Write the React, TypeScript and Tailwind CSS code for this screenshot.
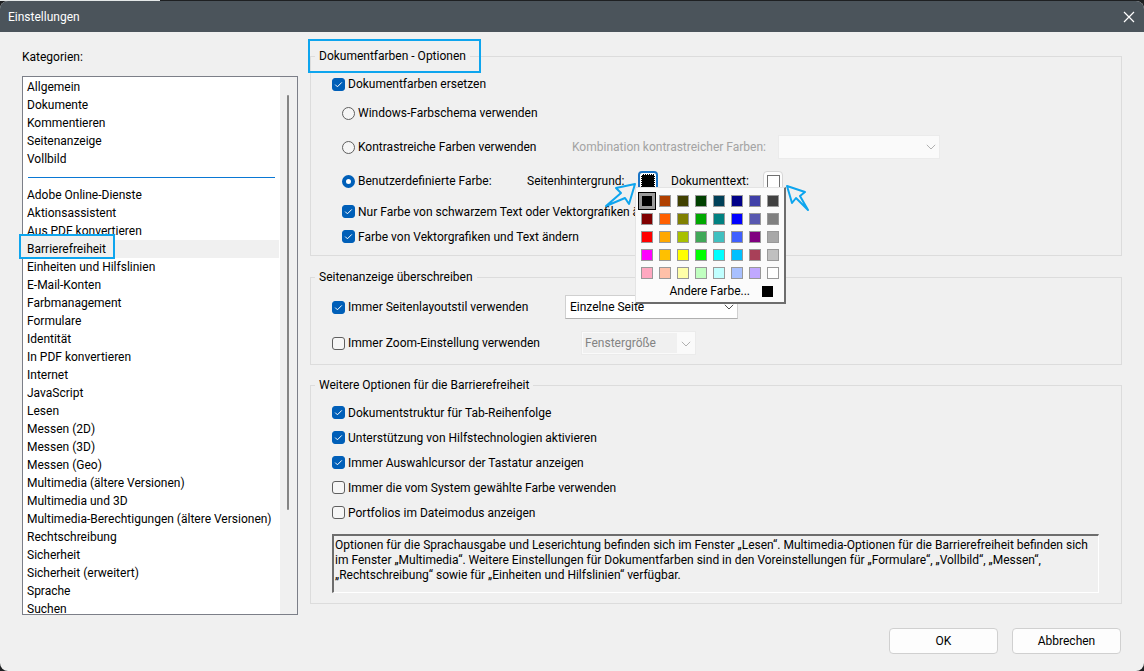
import React, { useState } from "react";

const topCategories = ["Allgemein", "Dokumente", "Kommentieren", "Seitenanzeige", "Vollbild"];

const categories = [
  "Adobe Online-Dienste",
  "Aktionsassistent",
  "Aus PDF konvertieren",
  "Barrierefreiheit",
  "Einheiten und Hilfslinien",
  "E-Mail-Konten",
  "Farbmanagement",
  "Formulare",
  "Identität",
  "In PDF konvertieren",
  "Internet",
  "JavaScript",
  "Lesen",
  "Messen (2D)",
  "Messen (3D)",
  "Messen (Geo)",
  "Multimedia (ältere Versionen)",
  "Multimedia und 3D",
  "Multimedia-Berechtigungen (ältere Versionen)",
  "Rechtschreibung",
  "Sicherheit",
  "Sicherheit (erweitert)",
  "Sprache",
  "Suchen",
];

const palette = [
  "#000000", "#b04000", "#404000", "#004000", "#004058", "#000088", "#4040a8", "#404040",
  "#800000", "#ff6000", "#808000", "#00a800", "#008080", "#0000ff", "#5858b0", "#808080",
  "#ff0000", "#ffa800", "#a8c000", "#40a858", "#40c0c0", "#4060ff", "#800080", "#a8a8a8",
  "#ff00ff", "#ffc000", "#ffff00", "#00ff00", "#00ffff", "#00c0ff", "#a84058", "#c0c0c0",
  "#ffa8c0", "#ffc0a8", "#ffffa8", "#c0ffc0", "#c0ffff", "#a8c0ff", "#c0a8ff", "#ffffff",
];

function Check({ label, on = false }: { label: string; on?: boolean }) {
  const [checked, setChecked] = useState(on);
  return (
    <label className="flex items-center gap-[3px] whitespace-nowrap">
      <span className="relative flex size-[13px] shrink-0">
        <input
          type="checkbox"
          checked={checked}
          onChange={() => setChecked(!checked)}
          className="size-[13px] appearance-none rounded-[3px] border border-[#5f5f5f] bg-[#f6f6f6] checked:border-[#005fb8] checked:bg-[#005fb8]"
        />
        {checked && (
          <svg viewBox="0 0 13 13" className="pointer-events-none absolute inset-0 size-[13px]" fill="none" stroke="#fff" strokeWidth="1">
            <path d="M3.2 6.6l2.2 2.2 4.4-4.4" />
          </svg>
        )}
      </span>
      {label}
    </label>
  );
}

function Radio({ label, on = false }: { label: string; on?: boolean }) {
  return (
    <label className="flex items-center gap-[3px] whitespace-nowrap">
      <input
        type="radio"
        name="farbmodus"
        defaultChecked={on}
        className="size-[13px] shrink-0 appearance-none rounded-full border border-[#5f5f5f] bg-[#f6f6f6] checked:border-4 checked:border-[#005fb8] checked:bg-white"
      />
      {label}
    </label>
  );
}

function Chevron({ muted }: { muted: boolean }) {
  return (
    <svg
      viewBox="0 0 10 6"
      className="pointer-events-none absolute right-1 top-[9px] h-[6px] w-[10px]"
      fill="none"
      stroke={muted ? "#b0b0b0" : "#505050"}
      strokeWidth="1"
    >
      <path d="M.8.8L5 5 9.200.8" />
    </svg>
  );
}

function Group({ title, marked = false, children }: { title: string; marked?: boolean; children: React.ReactNode }) {
  return (
    <fieldset className="min-w-0 border border-[#dcdcdc]">
      <legend className="relative ml-1 px-1 leading-[18px]">
        {title}
        {marked && <span className="pointer-events-none absolute -inset-y-2 -left-[7px] -right-[11px] border-2 border-[#0ea5ee]" />}
      </legend>
      {children}
    </fieldset>
  );
}

function Palette() {
  return (
    <div className="absolute -left-[3px] top-4 z-10 w-[151px] border border-[#e4e4e4] border-b-2 border-r-2 border-b-[#6d6d6d] border-r-[#6d6d6d] bg-[#fbfbfb] pb-[2px] pl-[2px] pt-1">
      <div className="grid w-36 grid-cols-8">
        {palette.map((c, i) => (
          <button
            key={c}
            type="button"
            aria-label={c}
            className={"flex size-[18px] items-center justify-center " + (i === 0 ? "border border-black bg-[#9b9b9b]" : "")}
          >
            <span
              className={i === 0 ? "size-[10px] shrink-0" : "size-3 shrink-0 border border-[#999]"}
              style={{ backgroundColor: c }}
            />
          </button>
        ))}
      </div>
      <button type="button" className="flex h-[18px] w-36 items-center justify-end gap-3 pr-[9px]">
        Andere Farbe...
        <span className="size-[11px] bg-black" />
      </button>
    </div>
  );
}

export default function App() {
  const [active, setActive] = useState("Barrierefreiheit");

  const item = (name: string) => (
    <li key={name} className={active === name ? "relative z-10 bg-[#f0f0f0]" : ""}>
      {active === name && (
        <span className="pointer-events-none absolute -left-1 -top-[6px] h-[25px] w-24 border-2 border-[#0ea5ee] bg-[#f0f0f0]" />
      )}
      <button
        type="button"
        onClick={() => setActive(name)}
        className="relative block h-[18px] w-full whitespace-nowrap pl-1 text-left"
      >
        {name}
      </button>
    </li>
  );

  return (
    <div className="min-h-screen bg-[#1e2022] font-['Roboto','Segoe_UI',sans-serif] text-[12px] leading-[18px] text-black">
      <div className="h-px w-[14%] bg-[#e4e8e8]" />
      <div className="flex min-h-[670px] flex-col overflow-hidden rounded-lg bg-[#f0f0f0]">
        <header className="flex h-[31px] items-center justify-between bg-[#4b545b] pl-2 pr-[9px] text-white">
          <h1>Einstellungen</h1>
          <button type="button" aria-label="Schließen">
            <svg viewBox="0 0 12 12" className="size-3" fill="none" stroke="#fff" strokeWidth="1.2">
              <path d="M1 1l10 10M11 1L1 11" />
            </svg>
          </button>
        </header>

        <main className="flex flex-1 gap-3 px-[22px] pb-[17px] pt-[15px]">
          <nav className="w-[276px] shrink-0" aria-label="Kategorien">
            <h2 className="pt-px">Kategorien:</h2>
            <div className="mt-[10px] flex h-[539px] overflow-y-clip border border-[#7c7f88] bg-white">
              <div className="min-w-0 flex-1 pr-px pt-px">
                <ul>{topCategories.map(item)}</ul>
                <div className="flex h-[18px] items-center pl-[5px] pr-1">
                  <div role="separator" className="h-px w-full bg-[#0a78d4]" />
                </div>
                <ul>{categories.map(item)}</ul>
              </div>
              <div className="flex w-[17px] justify-center bg-[#f0f0f0] pr-px pt-[18px]">
                <div className="h-[415px] w-[2px] rounded bg-[#858585]" />
              </div>
            </div>
          </nav>

          <div className="min-w-0 flex-1">
            <Group title="Dokumentfarben - Optionen" marked>
              <div className="flex flex-col pb-[6px] pl-[21px] pt-2">
                <div className="flex h-[22px] items-center">
                  <Check label="Dokumentfarben ersetzen" on />
                </div>
                <div className="flex flex-col pl-[10px]">
                  <div className="flex h-9 items-center">
                    <Radio label="Windows-Farbschema verwenden" />
                  </div>
                  <div className="flex h-8 items-center">
                    <div className="w-[230px]">
                      <Radio label="Kontrastreiche Farben verwenden" />
                    </div>
                    <label htmlFor="kombi" className="w-[206px] whitespace-nowrap text-[#a3a3a3]">
                      Kombination kontrastreicher Farben:
                    </label>
                    <span className="relative flex w-[162px]">
                      <select id="kombi" disabled className="h-6 w-full appearance-none border border-[#ebebeb] bg-[#fafafa] disabled:opacity-100">
                        <option />
                      </select>
                      <Chevron muted />
                    </span>
                  </div>
                  <div className="flex h-9 items-center">
                    <div className="w-[185px]">
                      <Radio label="Benutzerdefinierte Farbe:" on />
                    </div>
                    <span className="w-[111px]">Seitenhintergrund:</span>
                    <div className="relative">
                      <button type="button" aria-label="Seitenhintergrund" className="flex size-5 items-center justify-center rounded-[4px] border-2 border-[#1b74c5] bg-white">
                        <span className="size-[14px] shrink-0 border border-dotted border-white bg-black" />
                      </button>
                      <Palette />
                      <svg viewBox="0 0 34 28" className="pointer-events-none absolute -left-[34px] top-[10px] z-20 h-7 w-[34px]" fill="none" stroke="#0ea5ee" strokeWidth="2" strokeLinejoin="round">
                        <path d="M31 3L12 7l5 5L2 25l19-8 4 6z" />
                      </svg>
                    </div>
                    <span className="ml-[13px] w-[92px]">Dokumenttext:</span>
                    <div className="relative">
                      <button type="button" aria-label="Dokumenttext" className="flex size-5 items-center justify-center rounded-[4px] border border-[#d6d6d6] bg-[#fdfdfd]">
                        <span className="size-[13px] border border-[#707070] bg-white" />
                      </button>
                      <svg viewBox="0 0 28 28" className="pointer-events-none absolute left-5 top-[12px] z-20 size-7" fill="none" stroke="#0ea5ee" strokeWidth="2" strokeLinejoin="round">
                        <path d="M4 3l5 17 4-5 12 12-8-14 5-4z" />
                      </svg>
                    </div>
                  </div>
                  <div className="flex h-[25px] items-center">
                    <Check label="Nur Farbe von schwarzem Text oder Vektorgrafiken ändern" on />
                  </div>
                  <div className="flex h-[25px] items-center">
                    <Check label="Farbe von Vektorgrafiken und Text ändern" on />
                  </div>
                </div>
              </div>
            </Group>

            <div className="pt-3">
              <Group title="Seitenanzeige überschreiben">
                <div className="flex flex-col pb-[3px] pl-[21px] pt-[3px]">
                  <div className="flex h-9 items-center">
                    <div className="w-[233px]">
                      <Check label="Immer Seitenlayoutstil verwenden" on />
                    </div>
                    <span className="relative flex w-[173px]">
                      <select aria-label="Seitenlayoutstil" className="h-6 w-full appearance-none border border-[#d0d0d0] border-b-[#b0b0b0] bg-white pl-1">
                        <option>Einzelne Seite</option>
                      </select>
                      <Chevron muted={false} />
                    </span>
                  </div>
                  <div className="flex h-9 items-center">
                    <div className="w-[249px]">
                      <Check label="Immer Zoom-Einstellung verwenden" />
                    </div>
                    <span className="relative flex h-6 w-[115px] border border-[#ebebeb] bg-[#fafafa] py-px pl-px pr-[18px]">
                      <select aria-label="Zoom-Einstellung" disabled className="w-full appearance-none bg-[#f0f0f0] pl-[2px] text-[#838383] disabled:opacity-100">
                        <option>Fenstergröße</option>
                      </select>
                      <Chevron muted />
                    </span>
                  </div>
                </div>
              </Group>
            </div>

            <div className="pt-[11px]">
              <Group title="Weitere Optionen für die Barrierefreiheit">
                <div className="flex flex-col pb-[10px] pl-[21px] pr-[22px] pt-[6px]">
                  <div className="flex h-[25px] items-center">
                    <Check label="Dokumentstruktur für Tab-Reihenfolge" on />
                  </div>
                  <div className="flex h-[25px] items-center">
                    <Check label="Unterstützung von Hilfstechnologien aktivieren" on />
                  </div>
                  <div className="flex h-[25px] items-center">
                    <Check label="Immer Auswahlcursor der Tastatur anzeigen" on />
                  </div>
                  <div className="flex h-[25px] items-center">
                    <Check label="Immer die vom System gewählte Farbe verwenden" />
                  </div>
                  <div className="flex h-[25px] items-center">
                    <Check label="Portfolios im Dateimodus anzeigen" />
                  </div>
                  <p className="mt-[9px] min-h-[59px] border border-l-2 border-t-2 border-b-white border-l-[#6d6d6d] border-r-white border-t-[#6d6d6d] pl-px pt-[2px] leading-[15px]">
                    Optionen für die Sprachausgabe und Leserichtung befinden sich im Fenster „Lesen“. Multimedia-Optionen für die Barrierefreiheit befinden sich im Fenster „Multimedia“. Weitere Einstellungen für Dokumentfarben sind in den Voreinstellungen für „Formulare“, „Vollbild“, „Messen“, „Rechtschreibung“ sowie für „Einheiten und Hilfslinien“ verfügbar.
                  </p>
                </div>
              </Group>
            </div>

            <div className="flex justify-end gap-[14px] pr-px pt-6">
              <button type="button" className="h-[26px] w-[109px] rounded-[4px] border border-[#d0d0d0] bg-[#fdfdfd]">
                OK
              </button>
              <button type="button" className="h-[26px] w-[109px] rounded-[4px] border border-[#d0d0d0] bg-[#fdfdfd]">
                Abbrechen
              </button>
            </div>
          </div>
        </main>
      </div>
    </div>
  );
}
